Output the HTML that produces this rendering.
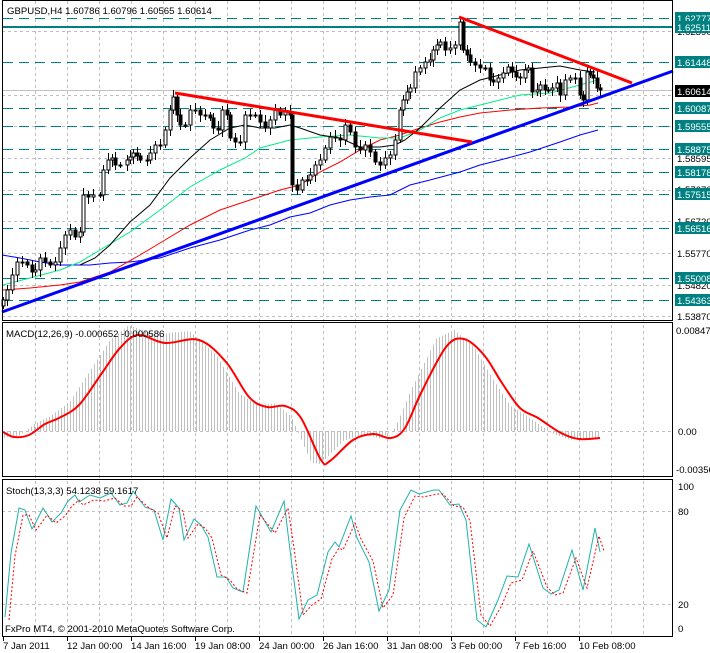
<!DOCTYPE html>
<html><head><meta charset="utf-8"><style>
html,body{margin:0;padding:0;background:#fff;}
svg{display:block;font-family:"Liberation Sans",sans-serif;}
</style></head><body>
<svg id="s" width="710" height="653" viewBox="0 0 710 653" xmlns="http://www.w3.org/2000/svg">
<rect width="710" height="653" fill="#fff"/>
<g id="vgrid" stroke="#c0c0c0" stroke-dasharray="3 3" stroke-width="1"></g>
<g id="hgrid" stroke="#c0c0c0" stroke-dasharray="3 3" stroke-width="1">
<line x1="2" y1="31.5" x2="673" y2="31.5"/><line x1="2" y1="95.5" x2="673" y2="95.5"/>
<line x1="2" y1="126.5" x2="673" y2="126.5"/><line x1="2" y1="158.5" x2="673" y2="158.5"/>
<line x1="2" y1="190.5" x2="673" y2="190.5"/><line x1="2" y1="221.5" x2="673" y2="221.5"/>
<line x1="2" y1="253.5" x2="673" y2="253.5"/><line x1="2" y1="285.5" x2="673" y2="285.5"/>
<line x1="2" y1="316.5" x2="673" y2="316.5"/>
<line x1="2" y1="431.5" x2="673" y2="431.5"/>
<line x1="2" y1="511.5" x2="673" y2="511.5"/><line x1="2" y1="604.5" x2="673" y2="604.5"/>
</g>
<line x1="2" y1="90.5" x2="673" y2="90.5" stroke="#c0c0c0"/>
<g stroke="#008080" stroke-width="1" stroke-dasharray="10 6">
<line x1="3" y1="18.5" x2="673" y2="18.5"/><line x1="3" y1="62.5" x2="673" y2="62.5"/>
<line x1="3" y1="108.5" x2="673" y2="108.5"/><line x1="3" y1="126.5" x2="673" y2="126.5"/>
<line x1="3" y1="149.5" x2="673" y2="149.5"/><line x1="3" y1="172.5" x2="673" y2="172.5"/>
<line x1="3" y1="194.5" x2="673" y2="194.5"/><line x1="3" y1="228.5" x2="673" y2="228.5"/>
<line x1="3" y1="278.5" x2="673" y2="278.5"/><line x1="3" y1="300.5" x2="673" y2="300.5"/>
</g>
<line x1="2" y1="27" x2="673" y2="27" stroke="#008080" stroke-width="2"/>
<g fill="none" stroke-width="1">
<polyline stroke="#0000ff" points="2,255 20,258 40,262 60,265 90,265 110,263 130,262 160,258 190,248 220,240 250,230 270,225 290,217 310,213 330,205 350,200 370,197 390,195 410,185 430,180 460,172 480,165 500,160 530,152 560,142 580,135 598,130"/>
<polyline stroke="#ff0000" points="3,290 30,288 60,285 80,282 110,272 140,255 160,243 190,225 220,210 250,200 280,190 300,185 320,172 340,162 360,150 380,140 400,135 420,128 440,122 460,117 480,113 510,110 540,108 570,107 590,105 598,103"/>
<polyline stroke="#00ee88" points="3,285 30,278 60,270 80,262 100,250 130,232 160,210 190,187 220,170 245,158 260,148 290,140 320,137 350,135 380,138 400,138 420,130 440,118 460,110 480,105 500,100 520,95 550,93 580,85 598,80"/>
<polyline stroke="#000" points="80,265 95,258 110,245 130,222 150,205 170,178 190,158 210,140 230,128 245,125 260,128 275,128 290,125 300,128 320,135 340,138 360,147 380,147 395,145 405,140 420,128 440,108 460,90 480,80 500,75 520,70 540,68 560,66 580,70 595,72"/>
</g>
<g id="candles"></g>
<line x1="2" y1="312" x2="673" y2="71" stroke="#0000ff" stroke-width="3"/>
<line x1="175" y1="93" x2="472" y2="142" stroke="#ff0000" stroke-width="3"/>
<line x1="459" y1="17" x2="632" y2="83" stroke="#ff0000" stroke-width="3"/>
<g id="hist" stroke="#c0c0c0" stroke-width="1"></g>
<path id="macd" fill="none" stroke="#ff0000" stroke-width="2" stroke-linejoin="round" d=""/>
<polyline id="st" fill="none" stroke="#20b2aa" stroke-width="1" points="5,617 11,553 19,508 25,510 32,529 36,522 43,508 52,522 61,513 68,501 75,495 79,502 90,495 100,498 111,493 120,505 127,503 133,491 145,507 154,510 163,540 171,499 179,508 184,540 194,519 201,525 208,537 217,577 226,577 233,588 243,592 256,506 271,532 284,501 290,550 299,619 308,600 317,595 328,552 335,542 339,547 351,516 357,538 369,562 379,611 389,590 400,510 411,490 419,494 434,490 439,490 450,505 459,504 466,520 477,620 486,627 498,600 507,576 518,577 529,544 543,588 551,594 559,590 572,550 583,590 595,528 600,552"/>
<polyline transform="translate(4,3)" fill="none" stroke="#ff0000" stroke-width="1" stroke-dasharray="2 2" points="5,617 11,553 19,512 25,512 32,527 36,522 43,512 52,520 61,513 68,503 75,497 79,502 90,497 100,498 111,495 120,503 127,503 133,494 145,505 154,510 163,535 171,503 179,508 184,535 194,521 201,525 208,535 217,572 226,577 233,586 243,590 256,512 271,530 284,505 290,545 299,612 308,602 317,596 328,556 335,545 339,547 351,520 357,536 369,558 379,605 389,592 400,515 411,493 419,494 434,491 439,491 450,503 459,504 466,518 477,612 486,623 498,602 507,580 518,577 529,548 543,584 551,592 559,590 572,555 583,585 595,533 600,548"/>
<g fill="none" stroke="#000" stroke-width="1">
<rect x="2.5" y="0.5" width="670" height="320"/>
<rect x="2.5" y="322.5" width="670" height="154"/>
<rect x="2.5" y="479.5" width="670" height="157"/>
</g>
<g font-size="9.6" fill="#000">
<text x="7" y="14">GBPUSD,H4  1.60786 1.60796 1.60565 1.60614</text>
<text x="6" y="337">MACD(12,26,9) -0.000652 -0.000586</text>
<text x="6" y="494">Stoch(13,3,3) 54.1238 59.1617</text>
<text x="5" y="632">FxPro MT4, © 2001-2010 MetaQuotes Software Corp.</text>
</g>
<g font-size="9.6" fill="#000">
<text x="677" y="35">1.62390</text><text x="677" y="162">1.58595</text><text x="677" y="193">1.57670</text>
<text x="677" y="225">1.56720</text><text x="677" y="257">1.55770</text><text x="677" y="289">1.54820</text>
<text x="677" y="320">1.53870</text>
<text x="676" y="334">0.00847</text><text x="678" y="435">0.00</text><text x="676" y="473">-0.00356</text>
<text x="678" y="490">100</text><text x="678" y="515">80</text><text x="678" y="608">20</text><text x="678" y="632">0</text>
</g>
<g id="labels" font-size="9.6" fill="#fff"></g>
<g font-size="9.6" fill="#000" id="dates"></g>
<g stroke="#000" id="ticks"></g>
</svg>
<script>
var NS="http://www.w3.org/2000/svg";
function el(p,t,a,txt){var e=document.createElementNS(NS,t);for(var k in a)e.setAttribute(k,a[k]);if(txt)e.textContent=txt;document.getElementById(p).appendChild(e);return e;}
for(var x=35;x<673;x+=32){el("vgrid","line",{x1:x+.5,y1:1,x2:x+.5,y2:636});}
var lv=[[18,"1.62777","#008080"],[27,"1.62511","#008080"],[62,"1.61448","#008080"],[91,"1.60614","#000"],[108,"1.60087","#008080"],[126,"1.59555","#008080"],[149,"1.58875","#008080"],[172,"1.58178","#008080"],[194,"1.57515","#008080"],[228,"1.56516","#008080"],[278,"1.55008","#008080"],[300,"1.54363","#008080"]];
lv.forEach(function(l){el("labels","rect",{x:675,y:l[0]-6,width:35,height:12,fill:l[2]});el("labels","text",{x:677,y:l[0]+4},l[1]);});
var d=[[3,"7 Jan 2011"],[67,"12 Jan 00:00"],[131,"14 Jan 16:00"],[195,"19 Jan 08:00"],[259,"24 Jan 00:00"],[323,"26 Jan 16:00"],[387,"31 Jan 08:00"],[451,"3 Feb 00:00"],[515,"7 Feb 16:00"],[579,"10 Feb 08:00"]];
d.forEach(function(a){el("dates","text",{x:a[0],y:649},a[1]);el("ticks","line",{x1:a[0]+.5,y1:637,x2:a[0]+.5,y2:641});});
var c=[[3,300],[7,290],[12,275],[17,262],[22,262],[27,265],[32,272],[35,270],[40,258],[45,262],[50,265],[55,262],[60,248],[65,235],[70,230],[75,237],[80,232],[83,195],[88,197],[93,195],[100,195],[103,170],[108,160],[112,158],[115,165],[120,165],[127,160],[130,157],[133,153],[137,156],[140,160],[147,160],[150,153],[155,145],[160,145],[165,130],[170,110],[173,97],[177,115],[180,125],[185,125],[190,110],[195,110],[200,115],[205,115],[210,118],[213,128],[218,130],[222,110],[227,115],[230,138],[235,142],[240,142],[245,115],[250,115],[255,115],[260,122],[265,128],[270,120],[275,110],[280,115],[285,112],[290,115],[292,185],[297,190],[302,180],[307,180],[310,175],[315,165],[320,160],[325,148],[330,137],[335,138],[340,140],[345,125],[350,132],[355,147],[360,150],[365,145],[370,152],[375,162],[380,165],[385,158],[390,155],[395,140],[400,110],[403,100],[407,92],[410,88],[415,72],[420,68],[425,62],[430,60],[433,50],[437,45],[440,42],[445,50],[450,48],[455,45],[460,22],[463,50],[467,55],[470,62],[475,65],[480,68],[485,68],[490,80],[493,82],[498,78],[503,73],[508,67],[512,72],[516,77],[520,78],[525,70],[528,68],[532,92],[537,90],[540,85],[545,90],[548,90],[552,88],[557,83],[560,95],[565,80],[570,78],[575,78],[580,95],[583,100],[587,72],[590,75],[593,78],[597,88],[600,90]];
var prev=c[0][1]+6;
c.forEach(function(p,i){var o=prev,cl=p[1];var hi=Math.min(o,cl)-3-(i*7%5),lo=Math.max(o,cl)+3+(i*3%5);
el("candles","line",{x1:p[0]+.5,y1:hi,x2:p[0]+.5,y2:lo,stroke:"#000"});
var t=Math.min(o,cl),h=Math.max(Math.abs(o-cl),1);
el("candles","rect",{x:p[0]-1,y:t,width:3,height:h,fill:cl<o?"#fff":"#000",stroke:"#000","stroke-width":1});prev=cl;});
var m=[[3,432],[14,437],[29,435],[45,424],[59,418],[79,405],[102,373],[120,348],[138,335],[165,343],[199,340],[226,362],[249,397],[267,407],[285,406],[301,418],[321,460],[330,461],[353,440],[373,434],[391,438],[405,428],[421,393],[446,347],[464,339],[484,355],[502,383],[520,408],[538,418],[561,433],[579,439],[600,438]];
var dp="M"+m[0][0]+","+m[0][1];
for(var i=0;i<m.length-1;i++){var p0=m[Math.max(i-1,0)],p1=m[i],p2=m[i+1],p3=m[Math.min(i+2,m.length-1)];
dp+=" C"+(p1[0]+(p2[0]-p0[0])/6)+","+(p1[1]+(p2[1]-p0[1])/6)+" "+(p2[0]-(p3[0]-p1[0])/6)+","+(p2[1]-(p3[1]-p1[1])/6)+" "+p2[0]+","+p2[1];}
document.getElementById("macd").setAttribute("d",dp);
function iv(x){if(x<=m[0][0])return m[0][1];for(var i=1;i<m.length;i++)if(x<=m[i][0]){var a=m[i-1],b=m[i];return a[1]+(b[1]-a[1])*(x-a[0])/(b[0]-a[0]);}return m[m.length-1][1];}
for(var x=4;x<=600;x+=3){var v=iv(x+10);v=431+(v-431)*1.1;el("hist","line",{x1:x+.5,y1:431,x2:x+.5,y2:v});}
</script>
</body></html>
